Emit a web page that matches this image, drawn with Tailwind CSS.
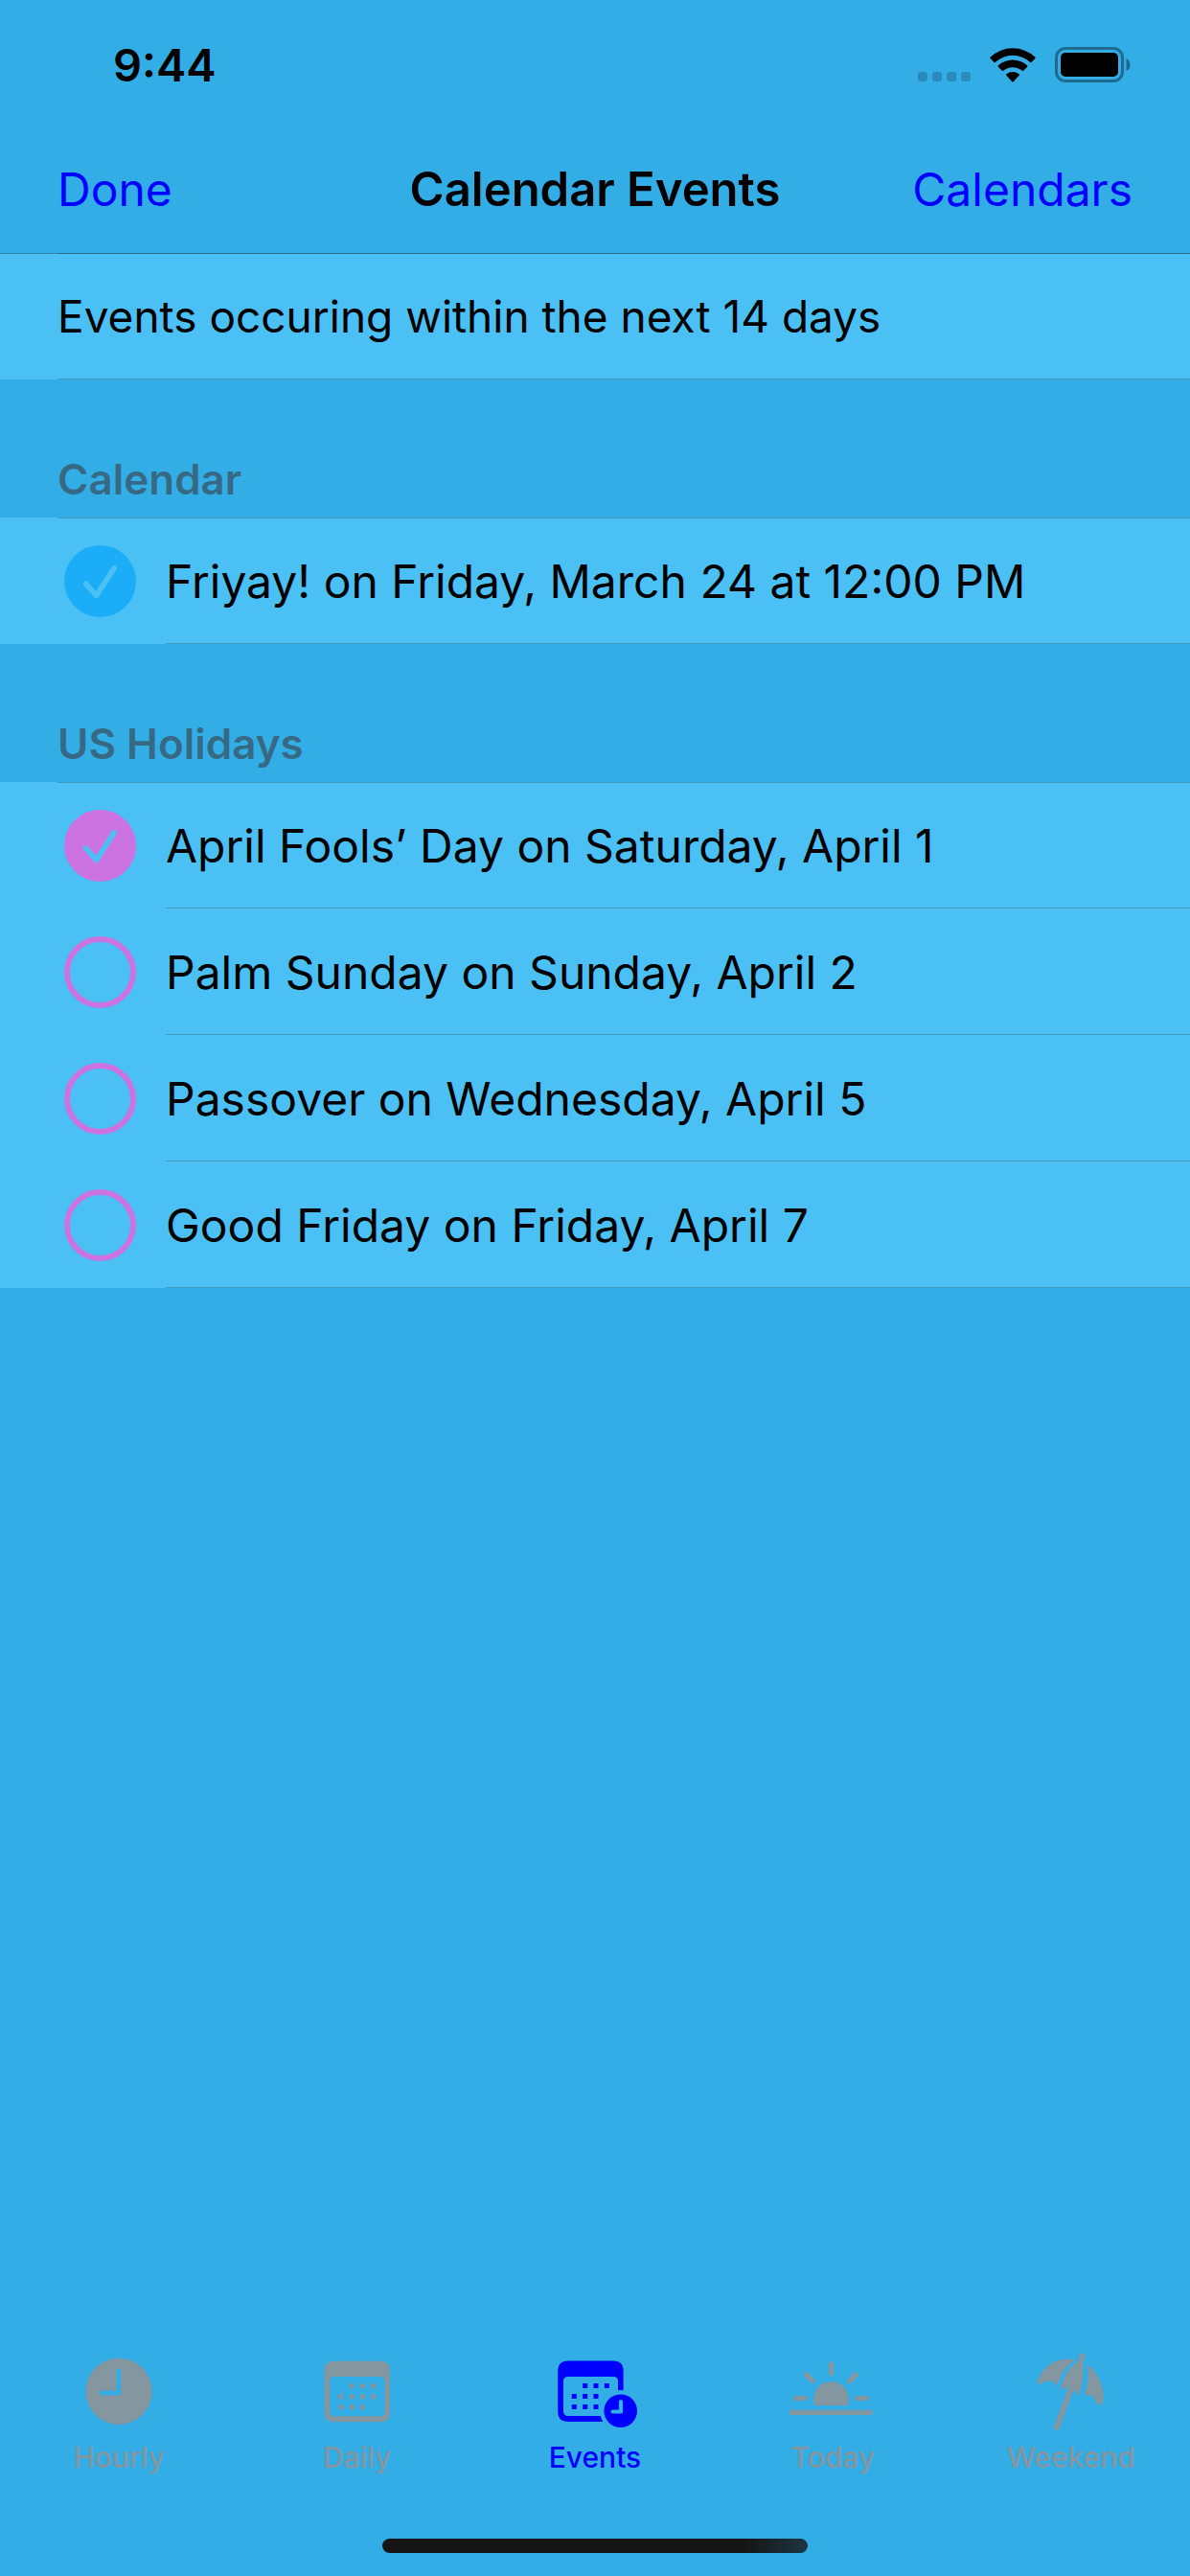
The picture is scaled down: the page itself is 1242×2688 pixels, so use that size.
<!DOCTYPE html>
<html lang="en">
<head>
<meta charset="utf-8">
<meta name="viewport" content="width=device-width, initial-scale=1">
<title>Calendar Events</title>
<script src="https://cdn.jsdelivr.net/npm/@tailwindcss/browser@4"></script>
</head>
<body class="flex min-h-screen flex-col bg-[#32ade6] font-['Inter','Liberation_Sans',sans-serif] text-black">

  <!-- Status bar -->
  <div class="flex h-[132px] items-center justify-between pt-[3px] pr-[62px] pl-[118px]">
    <time class="text-[47px] leading-[60px] font-semibold">9:44</time>
    <div class="flex items-center gap-5">
      <svg class="mt-[25px] h-[10px] w-[55px]" viewBox="0 0 55 10" fill="#2a8aba" aria-hidden="true">
        <rect width="10" height="10" rx="3"/><rect x="15" width="10" height="10" rx="3"/><rect x="30" width="10" height="10" rx="3"/><rect x="45" width="10" height="10" rx="3"/>
      </svg>
      <svg class="h-9 w-12" viewBox="0 0 48 36" aria-hidden="true">
        <path d="M.8 9.5A34 34 0 0 1 47.2 9.5Q48 10.3 47.4 11L43.5 15Q43 15.6 42.3 15A27 27 0 0 0 5.7 15Q5 15.6 4.5 15L.6 11Q0 10.3 .8 9.5Z"/>
        <path d="M9 18.3A22 22 0 0 1 39 18.3Q39.8 19 39.2 19.8L35.2 23.8Q34.6 24.4 33.8 23.8A15 15 0 0 0 14.2 23.8Q13.4 24.4 12.8 23.8L8.8 19.8Q8.2 19 9 18.3Z"/>
        <path d="M17.5 27.2A10.5 10.5 0 0 1 30.5 27.2Q31.3 28 30.7 28.8L24.9 35Q24 36 23.1 35L17.3 28.8Q16.7 28 17.5 27.2Z"/>
      </svg>
      <svg class="h-[37px] w-[79px]" viewBox="0 0 79 37" aria-hidden="true">
        <rect x="1.5" y="1.5" width="69" height="34" rx="9.5" fill="none" stroke="#1f6b8f" stroke-width="3"/>
        <rect x="6" y="6" width="60" height="25" rx="5"/>
        <path d="M74.5 12Q78.5 13.5 78.5 18.5T74.5 25Z" fill="#1f6b8f"/>
      </svg>
    </div>
  </div>

  <!-- Navigation bar -->
  <header class="relative z-10 -mb-px grid h-[133px] grid-cols-[1fr_auto_1fr] items-center border-b border-black/30 px-[60px] text-[48px] leading-[64px]">
    <button type="button" class="justify-self-start text-[#0000ff]">Done</button>
    <h1 class="text-[49px] font-semibold">Calendar Events</h1>
    <button type="button" class="justify-self-end text-[#0000ff]">Calendars</button>
  </header>

  <main class="flex-1">
    <div class="bg-[#4bc0f4] pl-[60px]">
      <p class="flex h-[132px] items-center border-y border-[#3c3c43]/30 text-[46px] leading-[60px]">Events occuring within the next 14 days</p>
    </div>

    <section>
      <h2 class="flex h-36 items-end px-[60px] pb-[10px] text-[44px] leading-[60px] font-semibold text-[#3c3c43]/60">Calendar</h2>
      <div class="bg-[#4bc0f4] pl-[60px]">
        <ul class="border-t border-[#3c3c43]/30 text-[48px] leading-[64px]">
          <li class="h-[131px]">
            <label class="flex h-full items-center pl-[7px]">
              <span class="grid size-[75px] shrink-0">
                <input type="checkbox" checked class="col-start-1 row-start-1 size-full appearance-none rounded-full border-[6px] border-[#1badf8] checked:bg-[#1badf8]">
                <svg class="pointer-events-none col-start-1 row-start-1 size-full" viewBox="0 0 75 75" fill="none" stroke="#4bc0f4" stroke-width="5.6" stroke-linecap="round" stroke-linejoin="round" aria-hidden="true"><path d="M22.5 40L33.5 52.5L52 24"/></svg>
              </span>
              <span class="ml-[31px] flex h-full flex-1 items-center border-b border-[#3c3c43]/30 pt-[2px]">Friyay! on Friday, March 24 at 12:00 PM</span>
            </label>
          </li>
        </ul>
      </div>
    </section>

    <section>
      <h2 class="flex h-36 items-end px-[60px] pb-[10px] text-[44px] leading-[60px] font-semibold text-[#3c3c43]/60">US Holidays</h2>
      <div class="bg-[#4bc0f4] pl-[60px]">
        <ul class="border-t border-[#3c3c43]/30 text-[48px] leading-[64px]">
          <li class="h-[131px]">
            <label class="flex h-full items-center pl-[7px]">
              <span class="grid size-[75px] shrink-0">
                <input type="checkbox" checked class="col-start-1 row-start-1 size-full appearance-none rounded-full border-[6px] border-[#cc73e1] checked:bg-[#cc73e1]">
                <svg class="pointer-events-none col-start-1 row-start-1 size-full" viewBox="0 0 75 75" fill="none" stroke="#4bc0f4" stroke-width="5.6" stroke-linecap="round" stroke-linejoin="round" aria-hidden="true"><path d="M22.5 40L33.5 52.5L52 24"/></svg>
              </span>
              <span class="ml-[31px] flex h-full flex-1 items-center border-b border-[#3c3c43]/30 pt-[2px]">April Fools’ Day on Saturday, April 1</span>
            </label>
          </li>
          <li class="h-[132px]">
            <label class="flex h-full items-center pl-[7px]">
              <input type="checkbox" class="size-[75px] shrink-0 appearance-none rounded-full border-[6px] border-[#cc73e1] checked:bg-[#cc73e1]">
              <span class="ml-[31px] flex h-full flex-1 items-center border-b border-[#3c3c43]/30 pt-[2px]">Palm Sunday on Sunday, April 2</span>
            </label>
          </li>
          <li class="h-[132px]">
            <label class="flex h-full items-center pl-[7px]">
              <input type="checkbox" class="size-[75px] shrink-0 appearance-none rounded-full border-[6px] border-[#cc73e1] checked:bg-[#cc73e1]">
              <span class="ml-[31px] flex h-full flex-1 items-center border-b border-[#3c3c43]/30 pt-[2px]">Passover on Wednesday, April 5</span>
            </label>
          </li>
          <li class="h-[132px]">
            <label class="flex h-full items-center pl-[7px]">
              <input type="checkbox" class="size-[75px] shrink-0 appearance-none rounded-full border-[6px] border-[#cc73e1] checked:bg-[#cc73e1]">
              <span class="ml-[31px] flex h-full flex-1 items-center border-b border-[#3c3c43]/30 pt-[2px]">Good Friday on Friday, April 7</span>
            </label>
          </li>
        </ul>
      </div>
    </section>
  </main>

  <!-- Tab bar -->
  <nav class="grid grid-cols-5 pb-[69px] text-[30px] leading-8 font-medium text-[#84969f]">
    <a href="#hourly" class="flex flex-col items-center gap-2">
      <svg class="h-[88px] w-24" viewBox="0 0 96 88" aria-hidden="true">
        <circle cx="48" cy="43.3" r="34.6" fill="currentColor"/>
        <path d="M47.8 22V45H30" fill="none" stroke="#32ade6" stroke-width="4.8" stroke-linecap="round" stroke-linejoin="round"/>
      </svg>
      <span>Hourly</span>
    </a>
    <a href="#daily" class="flex flex-col items-center gap-2">
      <svg class="h-[88px] w-24" viewBox="0 0 96 88" fill="currentColor" aria-hidden="true">
        <path fill-rule="evenodd" d="M24 11.7H71.5Q82 11.7 82 22.2V64.8Q82 75.3 71.5 75.3H24Q13.5 75.3 13.5 64.8V22.2Q13.5 11.7 24 11.7ZM24 28Q19.2 28 19.2 32.5V64.5Q19.2 69.3 24 69.3H72Q76.6 69.3 76.6 64.5V32.5Q76.6 28 72 28Z"/>
        <path fill="none" stroke="currentColor" stroke-width="5" d="M39.5 37.7h5m6.3 0h5m6.3 0h5M28.2 48.7h5m6.3 0h5m6.3 0h5m6.3 0h5M28.2 59.7h5m6.3 0h5m6.3 0h5"/>
      </svg>
      <span>Daily</span>
    </a>
    <a href="#events" aria-current="page" class="flex flex-col items-center gap-2 text-[#0000ff]">
      <svg class="h-[88px] w-24" viewBox="0 0 96 88" fill="currentColor" aria-hidden="true">
        <path fill-rule="evenodd" d="M20 11.5H67Q77.6 11.5 77.6 22V64.5Q77.6 75 67 75H20Q9.3 75 9.3 64.5V22Q9.3 11.5 20 11.5ZM20 28Q15 28 15 32.5V64Q15 69 20 69H67Q72 69 72 64V32.5Q72 28 67 28Z"/>
        <path fill="none" stroke="currentColor" stroke-width="5" d="M35.2 37.5h5m6.3 0h5m6.3 0h5M23.8 48.5h5m6.4 0h5m6.3 0h5M23.8 59.5h5m6.4 0h5m6.3 0h5"/>
        <circle cx="74.7" cy="63.7" r="21.6" fill="#32ade6"/>
        <circle cx="74.7" cy="63.7" r="17.3"/>
        <path d="M75 54V64.5H66.5" fill="none" stroke="#32ade6" stroke-width="4.2" stroke-linecap="round" stroke-linejoin="round"/>
      </svg>
      <span>Events</span>
    </a>
    <a href="#today" class="flex flex-col items-center gap-2">
      <svg class="h-[88px] w-24" viewBox="0 0 96 88" fill="currentColor" aria-hidden="true">
        <path d="M29.4 58A18.3 18.3 0 1 1 63.4 58Z"/>
        <path fill="none" stroke="currentColor" stroke-width="5.2" stroke-linecap="round" d="M5.3 65.3H87.3M46.3 15V24.5M20.5 25.8L27.3 32.6M72.2 25.8L65.4 32.6M9.6 50.5H19M73.6 50.5H83"/>
      </svg>
      <span>Today</span>
    </a>
    <a href="#weekend" class="flex flex-col items-center gap-2">
      <svg class="h-[88px] w-24" viewBox="0 0 96 88" fill="currentColor" aria-hidden="true">
        <path d="M52 10.3C34 7 19 16 13 32Q12.4 36.5 16 35.5C23 31 29 31 33.5 38C35 28 43 16 52 10.3Z"/>
        <path d="M56.7 5.5Q57.8 3 60.2 3.5Q63 4.5 62.4 7.5L60.2 13.5C61 26 60.5 37 55.2 47.2L51 42Q49 39 46 39.3H42.5L39.4 40.8Q37 41.5 37.3 39C40 28 45.5 19 54.3 12.5Z"/>
        <path d="M64.2 15.2C76 23 83 38 81.3 53Q80 57.8 76.5 57.6Q74.3 57 73.8 54.5C72.5 47.5 66 45.5 60.9 47.6C66 37 67 26 64.2 15.2Z"/>
        <path d="M48.5 38L32.9 80.7" stroke="currentColor" stroke-width="5.8" stroke-linecap="round"/>
      </svg>
      <span>Weekend</span>
    </a>
  </nav>

  <!-- Home indicator -->
  <div class="mx-auto mb-6 h-[15px] w-[444px] rounded-full bg-linear-to-r from-[#151515] from-85% to-[#1b3644]"></div>
</body>
</html>
